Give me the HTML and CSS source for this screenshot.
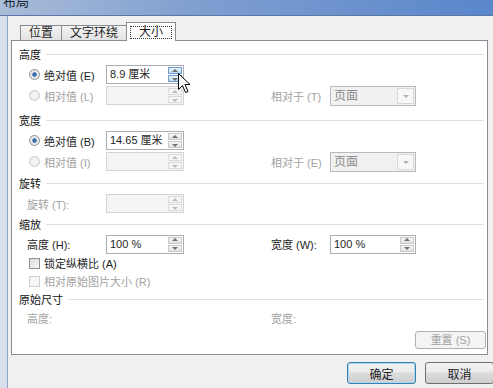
FILE: index.html
```html
<!DOCTYPE html>
<html lang="zh-CN">
<head>
    <meta charset="UTF-8">
    <title>布局</title>
    <link rel="stylesheet" href="styles.css">
</head>
<body>
    <div class="window">
        <div class="titlebar"><span class="title">布局</span></div>
        <div class="body">
            <div class="frame"></div>
            <div class="client">
                <div class="tabs">
                    <div class="tab">位置</div>
                    <div class="tab">文字环绕</div>
                    <div class="tab active"><span class="focus">大小</span></div>
                </div>

                <div class="panel">
                    <div class="sec">
                        <div class="sec-head"><span>高度</span></div>
                        <div class="row">
                            <label class="opt"><span class="radio on"></span>绝对值 (E)</label>
                            <div class="field">
                                <span class="val">8.9 厘米</span>
                                <span class="spin hot"><i class="up"></i><i class="down"></i></span>
                            </div>
                        </div>
                        <div class="row">
                            <label class="opt off"><span class="radio"></span>相对值 (L)</label>
                            <div class="field off">
                                <span class="val"></span>
                                <span class="spin"><i class="up"></i><i class="down"></i></span>
                            </div>
                            <span></span>
                            <span class="lbl off">相对于 (T)</span>
                            <div class="combo"><span class="val">页面</span><span class="drop"><i></i></span></div>
                        </div>
                    </div>

                    <div class="sec s2">
                        <div class="sec-head"><span>宽度</span></div>
                        <div class="row">
                            <label class="opt"><span class="radio on"></span>绝对值 (B)</label>
                            <div class="field">
                                <span class="val">14.65 厘米</span>
                                <span class="spin"><i class="up"></i><i class="down"></i></span>
                            </div>
                        </div>
                        <div class="row">
                            <label class="opt off"><span class="radio"></span>相对值 (I)</label>
                            <div class="field off">
                                <span class="val"></span>
                                <span class="spin"><i class="up"></i><i class="down"></i></span>
                            </div>
                            <span></span>
                            <span class="lbl off">相对于 (E)</span>
                            <div class="combo"><span class="val">页面</span><span class="drop"><i></i></span></div>
                        </div>
                    </div>

                    <div class="sec s3">
                        <div class="sec-head"><span>旋转</span></div>
                        <div class="row">
                            <span class="lbl plain off">旋转 (T):</span>
                            <div class="field off">
                                <span class="val"></span>
                                <span class="spin"><i class="up"></i><i class="down"></i></span>
                            </div>
                        </div>
                    </div>

                    <div class="sec s4">
                        <div class="sec-head"><span>缩放</span></div>
                        <div class="row tall">
                            <span class="lbl plain">高度 (H):</span>
                            <div class="field">
                                <span class="val">100 %</span>
                                <span class="spin"><i class="up"></i><i class="down"></i></span>
                            </div>
                            <span></span>
                            <span class="lbl">宽度 (W):</span>
                            <div class="field">
                                <span class="val">100 %</span>
                                <span class="spin"><i class="up"></i><i class="down"></i></span>
                            </div>
                        </div>
                        <div class="check-row">
                            <label class="opt"><span class="box"></span>锁定纵横比 (A)</label>
                        </div>
                        <div class="check-row">
                            <label class="opt off"><span class="box"></span>相对原始图片大小 (R)</label>
                        </div>
                    </div>

                    <div class="sec s5">
                        <div class="sec-head"><span>原始尺寸</span></div>
                        <div class="row short">
                            <span class="lbl plain off">高度:</span>
                            <span></span>
                            <span></span>
                            <span class="lbl off">宽度:</span>
                        </div>
                        <div class="reset-row">
                            <button class="btn small" disabled>重置 (S)</button>
                        </div>
                    </div>
                </div>

                <div class="footer">
                    <button class="btn default">确定</button>
                    <button class="btn">取消</button>
                </div>
            </div>
        </div>

        <svg class="cursor" width="13" height="21" viewBox="0 0 13 21">
            <path d="M0.5 0.5 L0.5 16.5 L4.5 12.5 L7.5 19.5 L10 18.5 L7 11.5 L12 11.5 Z" fill="#fff" stroke="#000" stroke-width="1"/>
        </svg>
    </div>
</body>
</html>
```

FILE: styles.css
```css
* {
    margin: 0;
    padding: 0;
    box-sizing: border-box;
}

body {
    width: 493px;
    height: 388px;
    overflow: hidden;
    font-family: "Liberation Sans", "Noto Sans CJK SC", sans-serif;
    font-size: 11px;
    color: #1e1e1e;
    background: #f0f0f0;
}

.window {
    position: relative;
    display: flex;
    flex-direction: column;
    height: 388px;
}

.titlebar {
    height: 16px;
    background: linear-gradient(to right, #a9bcd8, #7f9fd0 40%, #5a86cb);
    border-bottom: 1px solid #5a77a6;
    overflow: hidden;
}

.title {
    display: block;
    margin: -6px 0 0 3px;
    font-size: 13px;
    line-height: 16px;
    color: #1b2638;
}

.body {
    flex: 1;
    display: flex;
}

.frame {
    width: 8px;
    background: #d6dfea;
    border-right: 1px solid #8aa3c6;
}

.client {
    flex: 1;
    display: flex;
    flex-direction: column;
    padding: 0 5px 0 3px;
}

/* tabs */

.tabs {
    display: flex;
    align-items: flex-end;
    height: 24px;
    padding-left: 9px;
}

.tab {
    height: 15px;
    padding: 0 8px;
    margin-right: -1px;
    border: 1px solid #898c95;
    border-bottom: none;
    background: linear-gradient(#f4f4f4, #e2e2e2);
    font-size: 12px;
    line-height: 14px;
}

.tab.active {
    position: relative;
    z-index: 1;
    height: 19px;
    margin-bottom: -1px;
    padding: 3px 3px 0;
    width: 50px;
    background: #fff;
}

.focus {
    display: block;
    height: 13px;
    border: 1px dotted #333;
    text-align: center;
    line-height: 11px;
}

/* panel */

.panel {
    height: 315px;
    border: 1px solid #898c95;
    background: #fff;
    padding: 5px 0 0 7px;
}

.sec-head {
    display: flex;
    align-items: center;
    gap: 5px;
    height: 16px;
    margin-bottom: 2px;
    color: #111;
}

.sec-head::after {
    content: "";
    flex: 1;
    height: 1px;
    margin-right: 3px;
    background: #dde1e6;
}

.s2 { margin-top: 6px; }
.s3 { margin-top: 3px; }
.s4 { margin-top: 2px; }
.s5 { margin-top: 1px; }

.row {
    display: grid;
    grid-template-columns: 77px 78px 87px 59px 86px;
    align-items: center;
    height: 21px;
    margin-left: 10px;
}

.row.tall { height: 20px; }
.row.short { height: 18px; }

.check-row {
    display: flex;
    align-items: center;
    height: 18px;
    margin-left: 10px;
}

.opt {
    display: flex;
    align-items: center;
    gap: 4px;
    white-space: pre;
}

.lbl {
    white-space: pre;
}

.lbl.plain {
    margin-left: -2px;
}

.off {
    color: #a2a2a2;
}

.radio {
    width: 11px;
    height: 11px;
    border-radius: 50%;
    border: 1px solid #c9cbcd;
    background: radial-gradient(circle, #f4f4f4 30%, #e4e4e4);
}

.radio.on {
    border-color: #8e9092;
    background: radial-gradient(circle, #4c8fc9 0, #1c4f8f 28%, #dfe3e8 38%, #f2f2f2);
}

.box {
    width: 11px;
    height: 11px;
    border: 1px solid #8e9092;
    background: linear-gradient(135deg, #dcdcdc, #f6f6f6);
}

.off .box {
    border-color: #cfd1d3;
    background: #f6f6f6;
}

/* spin fields */

.field {
    display: flex;
    height: 19px;
    border: 1px solid #abadb3;
    background: #fff;
}

.field .val {
    flex: 1;
    padding-left: 3px;
    line-height: 17px;
    font-size: 11px;
    white-space: pre;
}

.field.off {
    border-color: #d3d5d8;
    background: #f4f4f4;
}

.spin {
    display: flex;
    flex-direction: column;
    width: 16px;
    padding: 1px;
    gap: 1px;
}

.spin i {
    flex: 1;
    position: relative;
    border: 1px solid #c6c8ca;
    background: linear-gradient(#f6f6f6, #e3e3e3);
}

.field.off .spin i {
    border-color: #dcdcdc;
    background: #f6f6f6;
}

.spin.hot i {
    border-color: #6d9cc9;
    background: linear-gradient(#e6f2fb, #bcdaf2);
}

.spin i::after {
    content: "";
    position: absolute;
    left: 50%;
    top: 50%;
    margin: -2px 0 0 -3px;
    border-left: 3px solid transparent;
    border-right: 3px solid transparent;
}

.spin .up::after {
    border-bottom: 3px solid #707070;
}

.spin .down::after {
    border-top: 3px solid #707070;
    margin-top: -1px;
}

.field.off .spin i::after {
    border-bottom-color: #bdbdbd;
    border-top-color: #bdbdbd;
}

/* combo */

.combo {
    display: flex;
    height: 20px;
    border: 1px solid #b7b9bc;
    background: #f1f1f1;
}

.combo .val {
    flex: 1;
    padding-left: 3px;
    line-height: 18px;
    color: #8a8a8a;
    font-size: 12px;
}

.drop {
    position: relative;
    width: 17px;
    margin: 1px;
    border: 1px solid #d8d8d8;
    background: #f7f7f7;
}

.drop i {
    position: absolute;
    left: 50%;
    top: 50%;
    margin: -1px 0 0 -3px;
    border-left: 3px solid transparent;
    border-right: 3px solid transparent;
    border-top: 3px solid #b3b3b3;
}

/* buttons */

.reset-row {
    display: flex;
    justify-content: flex-end;
    margin-top: 4px;
    padding-right: 1px;
}

.btn {
    width: 69px;
    height: 22px;
    border: 1px solid #707070;
    border-radius: 3px;
    background: linear-gradient(#f3f3f3, #ebebeb 45%, #dcdcdc 50%, #cfcfcf);
    font-family: inherit;
    font-size: 12px;
    color: #1e1e1e;
}

.btn.small {
    width: 71px;
    height: 18px;
    font-size: 11px;
    line-height: 14px;
    border-color: #adb2b5;
    background: #f4f4f4;
    color: #a2a2a2;
}

.btn.default {
    border-color: #3c7fb1;
    box-shadow: inset 0 0 0 1px #a6d6f4;
}

.footer {
    flex: 1;
    display: flex;
    justify-content: flex-end;
    gap: 9px;
    padding-top: 7px;
    margin-right: -6px;
}

.cursor {
    position: absolute;
    left: 178px;
    top: 73px;
}
```
